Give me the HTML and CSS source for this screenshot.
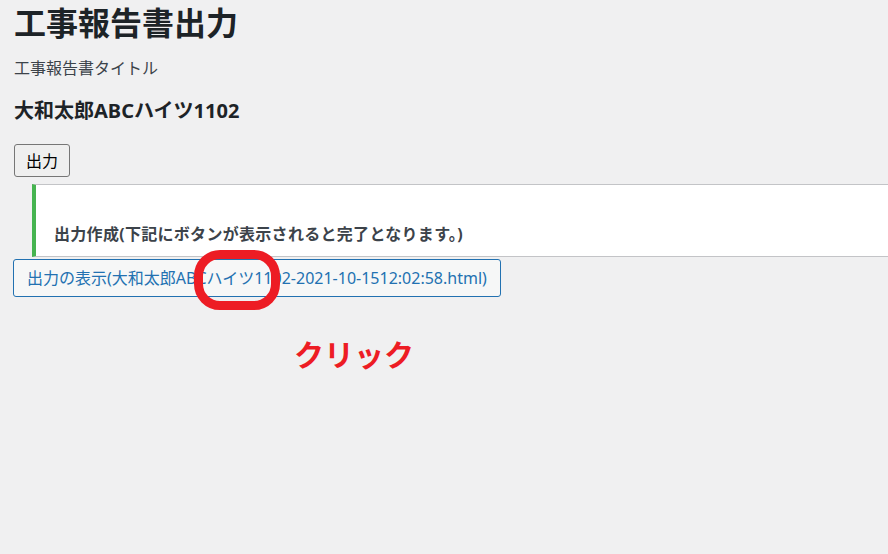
FILE: index.html
```html
<!DOCTYPE html>
<html lang="ja">
<head>
  <meta charset="UTF-8">
  <meta name="viewport" content="width=device-width, initial-scale=1.0">
  <title>工事報告書出力</title>
  <link rel="stylesheet" href="styles.css">
</head>
<body>
  <div class="wrap">
    <h1>工事報告書出力</h1>
    <p class="label">工事報告書タイトル</p>
    <h2>大和太郎ABCハイツ1102</h2>
    <button class="btn">出力</button>
    <div class="notice">
      <p>出力作成(下記にボタンが表示されると完了となります。)</p>
    </div>
    <div class="result">
      <a href="#" class="view-btn">出力の表示(大和太郎ABCハイツ1102-2021-10-1512:02:58.html)</a>
      <span class="mark"></span>
    </div>
    <div class="click">クリック</div>
  </div>
</body>
</html>
```

FILE: styles.css
```css
body {
  font-family: 'Noto Sans', 'Noto Sans CJK JP', sans-serif;
  margin: 0;
  padding: 0;
  background-color: #f0f0f1;
  color: #1d2327;
}
.wrap {
  padding: 0 0 0 13px;
}
h1 {
  font-size: 32px;
  font-weight: 700;
  line-height: 1.3;
  margin: 2px 0 0 1px;
}
.label {
  font-size: 16px;
  color: #3c434a;
  margin: 12px 0 0 1px;
  line-height: 1.5;
}
h2 {
  font-size: 20px;
  font-weight: 700;
  margin: 17px 0 0 1px;
  line-height: 1.4;
}
.btn {
  font-family: inherit;
  font-size: 16px;
  margin: 19px 0 0 1px;
  padding: 0 11px;
  height: 33px;
  background: #efefef;
  color: #000;
  border: 1px solid #767676;
  border-radius: 3px;
  display: block;
}
.notice {
  margin: 7px 0 0 19px;
  background: #fff;
  border: 1px solid #c3c4c7;
  border-left: 4px solid #46b450;
  border-right: none;
  height: 71px;
  display: flex;
  align-items: flex-end;
}
.notice p {
  margin: 0 0 11px 18px;
  font-size: 16px;
  font-weight: 700;
  color: #3c434a;
  letter-spacing: 0.3px;
}
.result {
  position: relative;
  margin-top: 2px;
}
.view-btn {
  display: inline-block;
  box-sizing: border-box;
  height: 38px;
  line-height: 36px;
  padding: 0 13px;
  font-size: 16px;
  color: #2271b1;
  background: #f6f7f7;
  border: 1px solid #2271b1;
  border-radius: 3px;
  text-decoration: none;
}
.mark {
  position: absolute;
  left: 181px;
  top: -9px;
  width: 86px;
  height: 60px;
  box-sizing: border-box;
  border: 9px solid #ed1c24;
  border-radius: 26px;
}
.click {
  margin: 38px 0 0 281px;
  font-size: 30px;
  font-weight: 700;
  color: #ed1c24;
  line-height: 1.3;
}
```
